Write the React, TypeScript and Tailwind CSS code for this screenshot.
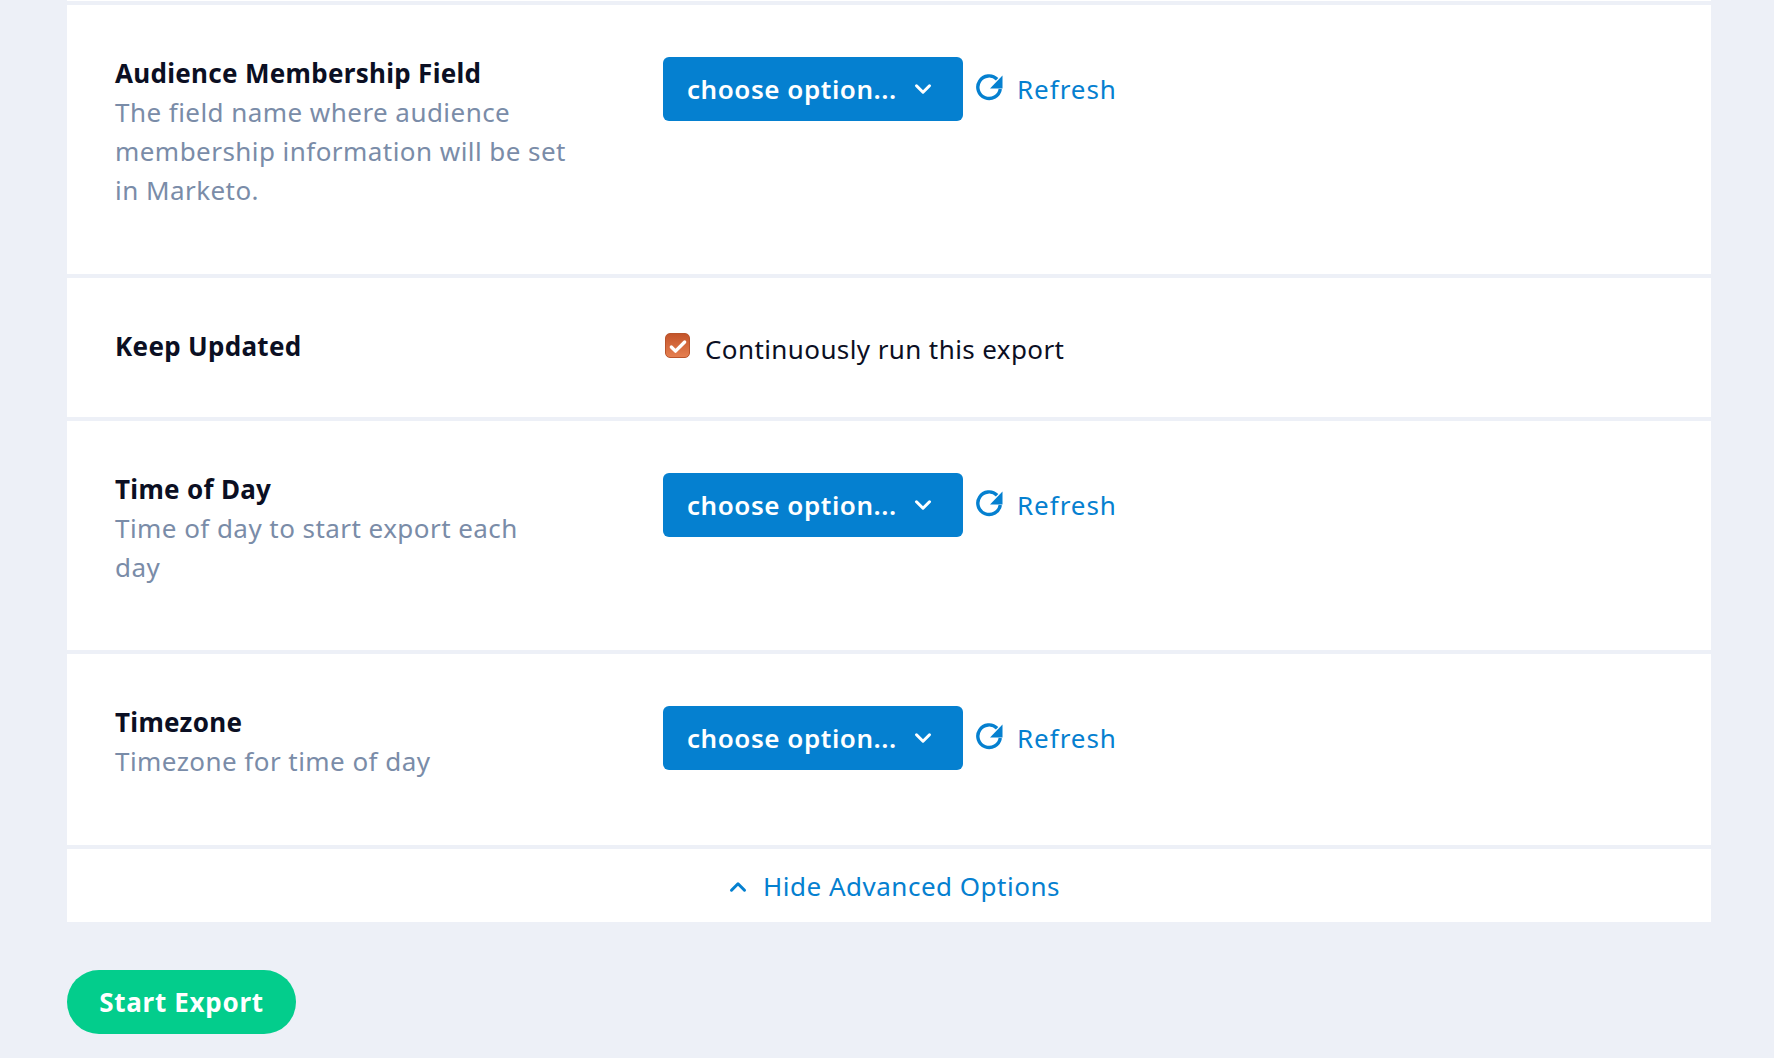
import { ChevronDown, ChevronUp, Check } from "lucide-react"

const font = "font-['Noto_Sans','Open_Sans',sans-serif]"

const RefreshIcon = () => (
    <svg width="28" height="28" viewBox="0 0 28 28" className="mr-[14px] -translate-y-0.5" fill="none">
        <path d="M22.1 6.2A11.3 11.3 0 1 0 25.3 16" stroke="currentColor" strokeWidth="3.4" />
        <path d="M27.5 2.5V15.5H15Z" fill="currentColor" />
    </svg>
)

const ChooseField = () => (
    <div className="flex items-center">
        <button className="flex h-16 w-[300px] items-center justify-between rounded-md bg-[#0580d0] pl-6 pr-[27px] text-[26px] leading-none font-semibold tracking-[0.55px] text-white">
            <span>choose option...</span>
            <ChevronDown size={26} strokeWidth={2.8} />
        </button>
        <a className="ml-3 flex items-center text-[26px] tracking-[0.95px] text-[#0580d0]">
            <RefreshIcon />
            Refresh
        </a>
    </div>
)

const OptionRow = ({ title, desc, padClass }: { title: string; desc: string; padClass: string }) => (
    <div className={`flex bg-white px-12 pt-12 ${padClass}`}>
        <div className="w-[548px] shrink-0 pt-px">
            <h3 className="text-[26px] leading-[39px] font-bold tracking-[0.3px] text-[#0b0f23]">{title}</h3>
            <p className="w-[453px] text-[26px] leading-[39px] tracking-[0.45px] text-[#7a8ca8]">{desc}</p>
        </div>
        <div className="pt-1">
            <ChooseField />
        </div>
    </div>
)

export default function App() {
    return (
        <div className={`h-[1058px] overflow-hidden bg-[#edf0f7] px-[67px] ${font}`}>
            <div className="flex w-[1644px] flex-col gap-1">
                <div className="h-px bg-white" />
                <OptionRow
                    title="Audience Membership Field"
                    desc="The field name where audience membership information will be set in Marketo."
                    padClass="pb-[64px]"
                />
                <div className="flex h-[139px] bg-white px-12 pt-[49px]">
                    <h3 className="w-[548px] shrink-0 text-[26px] leading-[39px] font-bold tracking-[0.3px] text-[#0b0f23]">Keep Updated</h3>
                    <div className="flex items-start">
                        <span className="mt-[6px] ml-0.5 flex h-[25px] w-[25px] items-center justify-center rounded-[5px] border border-[#b9542c] bg-gradient-to-b from-[#c4542a] to-[#e57f50]">
                            <Check size={20} strokeWidth={4} className="translate-y-px text-white" />
                        </span>
                        <span className="mt-[3px] ml-[15px] text-[26px] leading-[39px] tracking-[0.4px] text-[#0b0f23]">Continuously run this export</span>
                    </div>
                </div>
                <OptionRow title="Time of Day" desc="Time of day to start export each day" padClass="pb-[63px]" />
                <OptionRow title="Timezone" desc="Timezone for time of day" padClass="pb-[64px]" />
                <div className="flex h-[73px] items-center justify-center bg-white pt-0.5 pl-[7px] text-[26px] tracking-[0.5px] text-[#0580d0]">
                    <ChevronUp size={26} strokeWidth={2.8} className="mr-[12px]" />
                    Hide Advanced Options
                </div>
            </div>
            <button className="mt-12 flex h-16 w-[229px] items-center justify-center rounded-[32px] bg-[#03cd8c] text-[26px] font-bold tracking-[0.7px] text-white">
                Start Export
            </button>
        </div>
    )
}
